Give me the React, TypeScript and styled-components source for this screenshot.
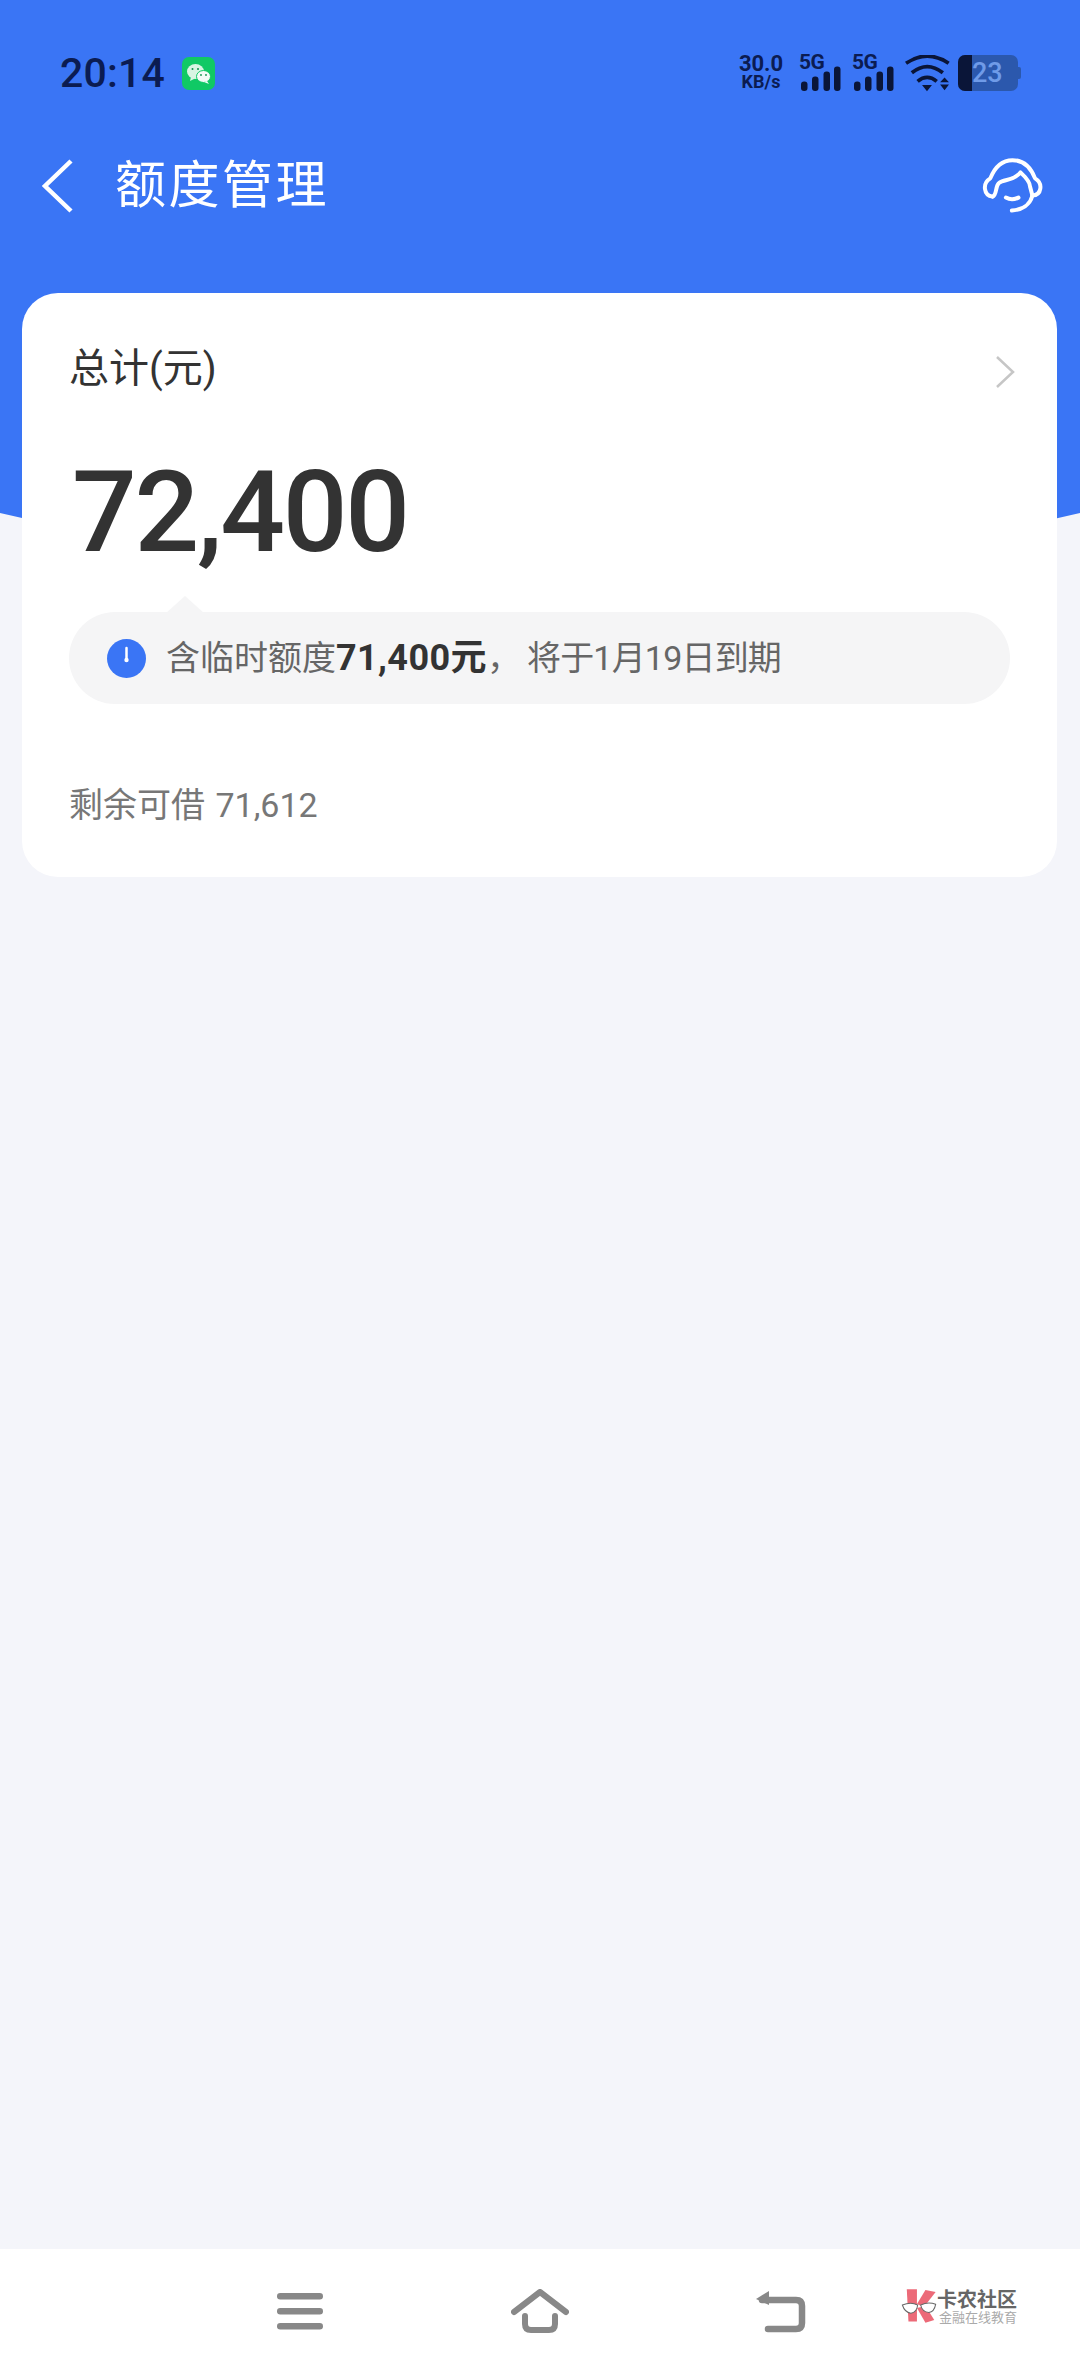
import styled, { createGlobalStyle } from 'styled-components';

const GlobalStyle = createGlobalStyle`
  html, body {
    margin: 0;
    padding: 0;
    background: #f4f5fa;
  }
  * {
    box-sizing: border-box;
  }
  body {
    font-family: Roboto, "Noto Sans CJK SC", sans-serif;
  }
`;

const S = {
  Page: styled.div`
    display: flex;
    flex-direction: column;
    width: 1080px;
    height: 2376px;
    overflow: hidden;
    background: #f4f5fa;
  `,
  Header: styled.header`
    position: relative;
    height: 576px;
    overflow: hidden;
    &::before {
      content: '';
      position: absolute;
      bottom: 0;
      left: 50%;
      width: 4700px;
      height: 4700px;
      border-radius: 50%;
      background: #3a75f5;
      transform: translateX(-50%);
    }
  `,
  HeaderContent: styled.div`
    position: relative;
    padding-top: 55px;
  `,
  StatusBar: styled.div`
    display: flex;
    align-items: center;
    justify-content: space-between;
    height: 36px;
    padding: 0 59px 0 60px;
  `,
  StatusLeft: styled.div`
    display: flex;
    align-items: center;
    gap: 17px;
  `,
  Time: styled.span`
    font-size: 41px;
    font-weight: 500;
    line-height: 36px;
    color: #0b1c52;
    letter-spacing: 0.2px;
  `,
  StatusRight: styled.div`
    display: flex;
    align-items: center;
    height: 36px;
  `,
  Speed: styled.div`
    display: flex;
    flex-direction: column;
    align-items: center;
    width: 48px;
    margin-right: 14px;
    color: #0b1c52;
    font-weight: 700;
  `,
  SpeedValue: styled.span`
    font-size: 22px;
    line-height: 18px;
  `,
  SpeedUnit: styled.span`
    font-size: 18px;
    line-height: 18px;
  `,
  Signal: styled.div`
    display: flex;
    flex-direction: column;
    width: 42px;
    margin-right: 11px;
  `,
  SignalLabel: styled.span`
    height: 15px;
    margin-bottom: -4px;
    font-size: 21px;
    font-weight: 700;
    line-height: 15px;
    letter-spacing: -0.5px;
    color: #0b1c52;
  `,
  Battery: styled.div`
    position: relative;
    display: flex;
    width: 60px;
    height: 36px;
    margin-left: 8px;
    border-radius: 7px;
    overflow: hidden;
    background: #2b58ad;
  `,
  BatteryLevel: styled.div`
    width: 14px;
    background: #0a1538;
  `,
  BatteryText: styled.span`
    flex: 1;
    font-size: 27px;
    font-weight: 500;
    line-height: 36px;
    color: #6f9be8;
  `,
  BatteryNub: styled.div`
    width: 3px;
    height: 12px;
    border-radius: 0 2px 2px 0;
    background: #2b58ad;
  `,
  NavBar: styled.div`
    display: flex;
    align-items: center;
    height: 54px;
    margin-top: 68px;
    padding: 0 35px 0 41px;
  `,
  Title: styled.h1`
    flex: 1;
    margin: 0 0 0 42px;
    font-size: 51px;
    font-weight: 400;
    line-height: 54px;
    letter-spacing: 2.5px;
    color: #fff;
  `,
  Card: styled.section`
    position: relative;
    margin: -283px 23px 0 22px;
    height: 584px;
    padding: 51px 47px 0;
    border-radius: 36px;
    background: #fff;
  `,
  CardHead: styled.div`
    display: flex;
    align-items: center;
    justify-content: space-between;
    height: 50px;
  `,
  CardTitle: styled.span`
    font-size: 40px;
    line-height: 50px;
    color: #333;
  `,
  Arrow: styled.div`
    display: flex;
    margin: 6px -6px 0 0;
  `,
  Amount: styled.div`
    margin: 58px 0 0 3px;
    font-size: 114px;
    font-weight: 500;
    line-height: 120px;
    letter-spacing: -2.3px;
    color: #333;
  `,
  Notice: styled.div`
    position: relative;
    display: flex;
    align-items: center;
    gap: 20px;
    height: 92px;
    margin-top: 40px;
    padding-left: 38px;
    border-radius: 46px;
    background: #f5f5f6;
    &::before {
      content: '';
      position: absolute;
      top: -16px;
      left: 96px;
      width: 0;
      height: 0;
      border-left: 20px solid transparent;
      border-right: 20px solid transparent;
      border-bottom: 18px solid #f5f5f6;
    }
  `,
  NoticeText: styled.span`
    font-size: 34px;
    line-height: 46px;
    color: #666;
  `,
  NoticeStrong: styled.b`
    font-size: 36px;
    font-weight: 700;
    letter-spacing: 0.4px;
    color: #333;
  `,
  NoticeComma: styled.span`
    margin-right: 6px;
  `,
  NoticeTail: styled.span`
    letter-spacing: -0.8px;
  `,
  Remaining: styled.div`
    margin-top: 78px;
    font-size: 34px;
    line-height: 46px;
    word-spacing: 2px;
    color: #777;
  `,
  Spacer: styled.div`
    flex: 1;
  `,
  BottomNav: styled.nav`
    position: relative;
    display: flex;
    align-items: center;
    justify-content: center;
    height: 127px;
    padding-bottom: 4px;
    background: #fff;
  `,
  NavSlot: styled.div`
    display: flex;
    justify-content: center;
    width: 240px;
  `,
  Watermark: styled.div`
    position: absolute;
    top: 39px;
    left: 901px;
    display: flex;
    gap: 0;
  `,
  WatermarkText: styled.div`
    display: flex;
    flex-direction: column;
  `,
  WatermarkName: styled.span`
    font-size: 20px;
    font-weight: 700;
    line-height: 24px;
    color: #666;
  `,
  WatermarkSub: styled.span`
    margin-left: 2px;
    font-size: 13px;
    line-height: 12px;
    color: #aaa;
  `,
};

const SignalBars = () => (
  <svg width="42" height="25" viewBox="0 0 42 25">
    <rect x="2" y="15.5" width="6.5" height="9.5" rx="3" fill="#0a1538" />
    <rect x="13" y="10.5" width="6.5" height="14.5" rx="3" fill="#0a1538" />
    <rect x="24.5" y="5.5" width="6.5" height="19.5" rx="3" fill="#0a1538" />
    <rect x="35" y="0.5" width="6.5" height="24.5" rx="3" fill="#0a1538" />
  </svg>
);

const WechatIcon = () => (
  <svg width="33" height="33" viewBox="0 0 33 33">
    <rect width="33" height="33" rx="7" fill="#10c965" />
    <ellipse cx="13.5" cy="14.5" rx="8.5" ry="7.5" fill="#d8f5e3" />
    <path d="M9 20l-1 4 5-2.500z" fill="#d8f5e3" />
    <ellipse cx="21.500" cy="19.500" rx="7" ry="6" fill="#f3fbf6" stroke="#10c965" strokeWidth="1" />
    <path d="M25 24l2 3-5-2z" fill="#f3fbf6" />
    <circle cx="10.500" cy="12" r="1" fill="#0f8f4c" />
    <circle cx="16" cy="12" r="1" fill="#0f8f4c" />
    <circle cx="19" cy="18" r="0.900" fill="#0f8f4c" />
    <circle cx="24" cy="18" r="0.900" fill="#0f8f4c" />
  </svg>
);

const WifiIcon = () => (
  <svg width="45" height="37" viewBox="672 106 132 108">
    <g fill="none" stroke="#0a1538" strokeWidth="11">
      <path d="M675 130 Q737 88 800 130" />
      <path d="M692 158 Q737 122 783 158" />
      <path d="M709 183 Q737 160 765 183" />
    </g>
    <path d="M722 194h29l-14.500 18zM775 186h26l-13-14zM775 192h26l-13 17z" fill="#0a1538" />
  </svg>
);

const BackIcon = () => (
  <svg width="32" height="54" viewBox="0 0 32 54" fill="none" stroke="#fff" strokeWidth="4.500">
    <path d="M30 2 L4 27 L30 52" />
  </svg>
);

const HeadsetIcon = () => (
  <svg width="63" height="58" viewBox="900 418 190 170" fill="none" stroke="#fff" strokeWidth="12" strokeLinecap="round" strokeLinejoin="round">
    <path d="M932 535 C905 532 900 495 925 480 C940 442 965 425 992 425 C1020 425 1045 442 1060 480 C1085 495 1080 530 1052 532" />
    <path d="M932 535 C945 530 940 505 950 495 C965 480 995 490 1016 462 C1030 475 1045 490 1045 505 L1052 532" />
    <path d="M1052 532 C1045 560 1020 575 990 577" />
    <path d="M972 538 Q990 548 1010 538" />
  </svg>
);

const ChevronRight = () => (
  <svg width="21" height="34" viewBox="0 0 21 34" fill="none" stroke="#c6c6c6" strokeWidth="2.500">
    <path d="M2 2 L18 17 L2 32" />
  </svg>
);

const ClockIcon = () => (
  <svg width="39" height="39" viewBox="0 0 39 39">
    <circle cx="19.500" cy="19.500" r="19.500" fill="#3a75f5" />
    <path d="M19.500 9v11" stroke="#fff" strokeWidth="2.500" strokeLinecap="round" />
    <circle cx="19.500" cy="21" r="2.200" fill="#fff" />
  </svg>
);

const MenuIcon = () => (
  <svg width="46" height="38" viewBox="0 0 46 38" fill="#888">
    <rect y="1" width="46" height="6.500" rx="3.200" />
    <rect y="16" width="46" height="6.500" rx="3.200" />
    <rect y="31" width="46" height="6.500" rx="3.200" />
  </svg>
);

const HomeIcon = () => (
  <svg width="58" height="44" viewBox="0 0 58 44" fill="none" stroke="#888" strokeWidth="6" strokeLinecap="round" strokeLinejoin="round">
    <path d="M3 23 L29 3 L55 23" />
    <path d="M14 27 V35 Q14 41 20 41 H38 Q44 41 44 35 V27" />
  </svg>
);

const ReturnIcon = () => (
  <svg width="52" height="44" viewBox="0 0 52 44" fill="none" stroke="#888" strokeWidth="6.500" strokeLinecap="round" strokeLinejoin="round">
    <path d="M8 11 H42 Q48 11 48 17 V34 Q48 40 42 40 H14" />
    <path d="M2 10 L15 2 V16z" fill="#888" stroke="none" />
  </svg>
);

const KLogo = () => (
  <svg width="36" height="36" viewBox="118 58 106 102">
    <path d="M135 60h30v95h-25z" fill="#ec6a78" />
    <path d="M190 62l30 6-35 45-20-10z" fill="#ec6a78" />
    <path d="M165 115l25-6 26 41-26 8z" fill="#ec6a78" />
    <path d="M122 106q25-10 45 0q-2 22-20 24q-18-2-25-24z" fill="#fff" stroke="#666" strokeWidth="3" />
    <path d="M176 106q22-10 44-2q-4 22-20 24q-20-2-24-22z" fill="#fff" stroke="#666" strokeWidth="3" />
  </svg>
);

function App() {
  return (
    <S.Page>
      <GlobalStyle />
      <S.Header>
        <S.HeaderContent>
          <S.StatusBar>
            <S.StatusLeft>
              <S.Time>20:14</S.Time>
              <WechatIcon />
            </S.StatusLeft>
            <S.StatusRight>
              <S.Speed>
                <S.SpeedValue>30.0</S.SpeedValue>
                <S.SpeedUnit>KB/s</S.SpeedUnit>
              </S.Speed>
              <S.Signal>
                <S.SignalLabel>5G</S.SignalLabel>
                <SignalBars />
              </S.Signal>
              <S.Signal>
                <S.SignalLabel>5G</S.SignalLabel>
                <SignalBars />
              </S.Signal>
              <WifiIcon />
              <S.Battery>
                <S.BatteryLevel />
                <S.BatteryText>23</S.BatteryText>
              </S.Battery>
              <S.BatteryNub />
            </S.StatusRight>
          </S.StatusBar>
          <S.NavBar>
            <BackIcon />
            <S.Title>额度管理</S.Title>
            <HeadsetIcon />
          </S.NavBar>
        </S.HeaderContent>
      </S.Header>
      <S.Card>
        <S.CardHead>
          <S.CardTitle>总计(元)</S.CardTitle>
          <S.Arrow>
            <ChevronRight />
          </S.Arrow>
        </S.CardHead>
        <S.Amount>72,400</S.Amount>
        <S.Notice>
          <ClockIcon />
          <S.NoticeText>
            含临时额度<S.NoticeStrong>71,400元</S.NoticeStrong>
            <S.NoticeComma>，</S.NoticeComma>
            <S.NoticeTail>将于1月19日到期</S.NoticeTail>
          </S.NoticeText>
        </S.Notice>
        <S.Remaining>剩余可借 71,612</S.Remaining>
      </S.Card>
      <S.Spacer />
      <S.BottomNav>
        <S.NavSlot>
          <MenuIcon />
        </S.NavSlot>
        <S.NavSlot>
          <HomeIcon />
        </S.NavSlot>
        <S.NavSlot>
          <ReturnIcon />
        </S.NavSlot>
        <S.Watermark>
          <KLogo />
          <S.WatermarkText>
            <S.WatermarkName>卡农社区</S.WatermarkName>
            <S.WatermarkSub>金融在线教育</S.WatermarkSub>
          </S.WatermarkText>
        </S.Watermark>
      </S.BottomNav>
    </S.Page>
  );
}

export default App;
